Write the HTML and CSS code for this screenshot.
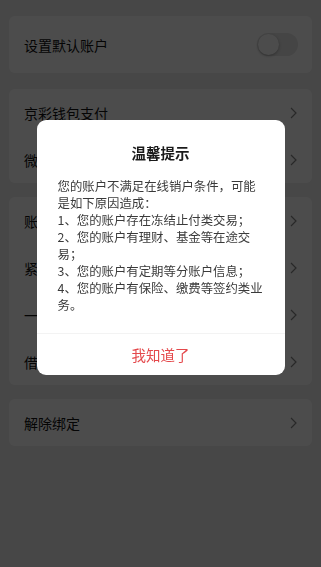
FILE: index.html
```html
<!DOCTYPE html>
<html lang="zh-CN">
<head>
<meta charset="utf-8">
<title>账户设置</title>
<link rel="stylesheet" href="styles.css">
</head>
<body>
<div class="page">
  <div class="card card-first">
    <div class="row row-tall">
      <span class="label">设置默认账户</span>
      <span class="switch"><span class="knob"></span></span>
    </div>
  </div>
  <div class="card">
    <div class="row"><span class="label">京彩钱包支付</span><svg class="chev" viewBox="0 0 7 12"><path d="M1 1l5 5-5 5"/></svg></div>
    <div class="row"><span class="label">微信支付</span><svg class="chev" viewBox="0 0 7 12"><path d="M1 1l5 5-5 5"/></svg></div>
  </div>
  <div class="card">
    <div class="row"><span class="label">账户明细</span><svg class="chev" viewBox="0 0 7 12"><path d="M1 1l5 5-5 5"/></svg></div>
    <div class="row"><span class="label">紧急止付</span><svg class="chev" viewBox="0 0 7 12"><path d="M1 1l5 5-5 5"/></svg></div>
    <div class="row"><span class="label">一键锁卡</span><svg class="chev" viewBox="0 0 7 12"><path d="M1 1l5 5-5 5"/></svg></div>
    <div class="row"><span class="label">借记卡服务</span><svg class="chev" viewBox="0 0 7 12"><path d="M1 1l5 5-5 5"/></svg></div>
  </div>
  <div class="card">
    <div class="row"><span class="label">解除绑定</span><svg class="chev" viewBox="0 0 7 12"><path d="M1 1l5 5-5 5"/></svg></div>
  </div>
</div>

<div class="mask">
  <div class="dialog">
    <div class="dlg-title">温馨提示</div>
    <div class="dlg-body">
      <p>您的账户不满足在线销户条件，可能是如下原因造成：</p>
      <p>1、您的账户存在冻结止付类交易；</p>
      <p>2、您的账户有理财、基金等在途交易；</p>
      <p>3、您的账户有定期等分账户信息；</p>
      <p>4、您的账户有保险、缴费等签约类业务。</p>
    </div>
    <div class="dlg-btn">我知道了</div>
  </div>
</div>
</body>
</html>
```

FILE: styles.css
```css
* { box-sizing: border-box; }
html, body {
  margin: 0;
  padding: 0;
  width: 321px;
  height: 567px;
  overflow: hidden;
  background: #eeeeee;
  font-family: "Noto Sans CJK SC", "Noto Sans", sans-serif;
}
.page {
  padding: 16px 9px 0;
  display: flex;
  flex-direction: column;
  gap: 14px;
}
.card {
  background: #ffffff;
  border-radius: 6px;
  padding: 0 14px 0 15px;
}
.card-first { margin-bottom: 2px; }
.row {
  height: 47px;
  display: flex;
  align-items: center;
  justify-content: space-between;
}
.row-tall { height: 57px; }
.label {
  font-size: 14px;
  color: #111111;
  line-height: 20px;
}
.chev {
  width: 7px;
  height: 12px;
  margin-right: 1px;
  fill: none;
  stroke: #888888;
  stroke-width: 1.2;
}
.switch {
  width: 41px;
  height: 23px;
  border-radius: 12px;
  background: #e6e6e6;
  padding: 1px;
  display: flex;
  align-items: center;
}
.knob {
  width: 21px;
  height: 21px;
  border-radius: 50%;
  background: #ffffff;
  box-shadow: 0 1px 3px rgba(0,0,0,0.3);
}
.mask {
  position: fixed;
  inset: 0;
  background: rgba(0,0,0,0.7);
  display: flex;
  justify-content: center;
  align-items: flex-start;
  padding-top: 120px;
}
.dialog {
  width: 248px;
  background: #ffffff;
  border-radius: 9px;
  overflow: hidden;
}
.dlg-title {
  padding-top: 22px;
  text-align: center;
  font-size: 14.5px;
  font-weight: bold;
  line-height: 21px;
  color: #1a1a1a;
}
.dlg-body {
  padding: 15px 20px 19px 21px;
  font-size: 12.4px;
  line-height: 17px;
  color: #3a3a3a;
}
.dlg-body p { margin: 0; }
.dlg-btn {
  border-top: 1px solid #f3f3f3;
  height: 42px;
  display: flex;
  align-items: center;
  justify-content: center;
  font-size: 14.5px;
  color: #e4484b;
}
```
